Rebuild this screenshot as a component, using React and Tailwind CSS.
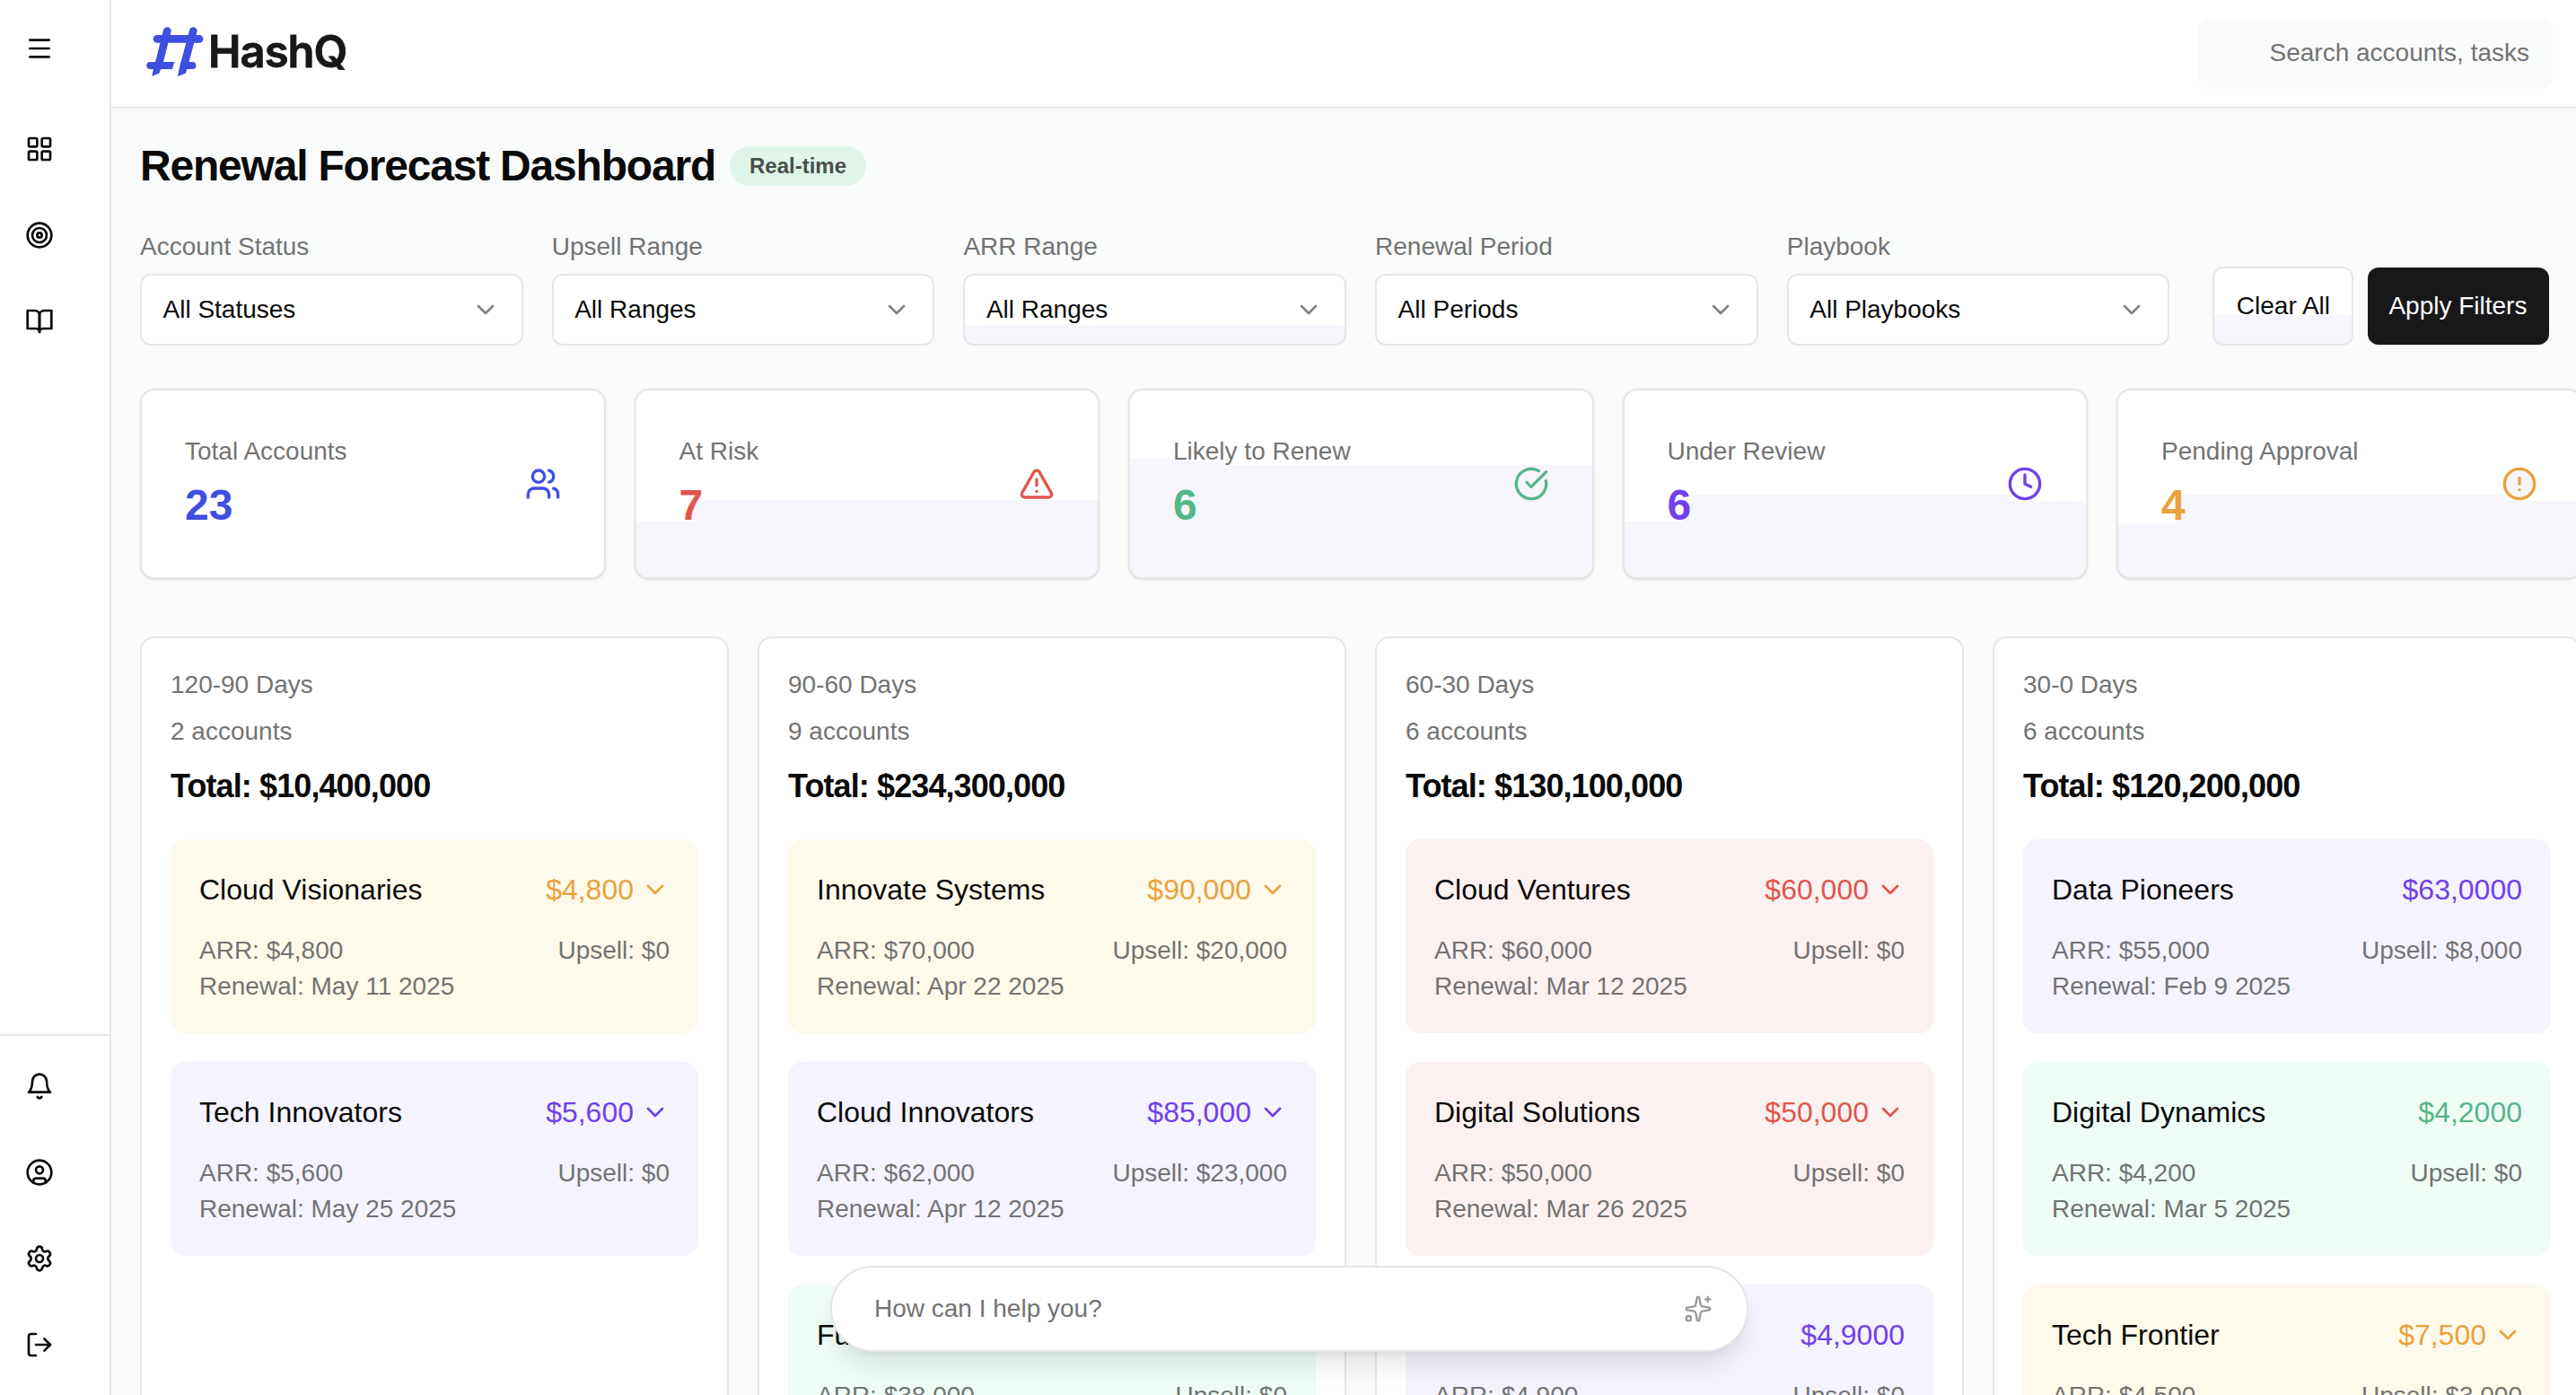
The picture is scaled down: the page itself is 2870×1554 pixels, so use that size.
import { Menu, LayoutGrid, Target, CircleUser, Settings, LogOut, ChevronDown, Users, TriangleAlert, CircleCheckBig, Clock, CircleAlert, Sparkles } from "lucide-react";

const C = { amber: "text-[#eba13c]", violet: "text-[#7140ea]", red: "text-[#e1554b]", green: "text-[#56b687]", blue: "text-[#3f4fe0]" };
const BG = { amber: "bg-[#fefaeb]", violet: "bg-[#f5f3fe]", red: "bg-[#fbf1f1]", green: "bg-[#effcf6]" };

const filters = [
  ["Account Status", "All Statuses"],
  ["Upsell Range", "All Ranges"],
  ["ARR Range", "All Ranges", true],
  ["Renewal Period", "All Periods"],
  ["Playbook", "All Playbooks"],
];

const stats = [
  { label: "Total Accounts", value: "23", color: "blue", Icon: Users, tint: [] },
  { label: "At Risk", value: "7", color: "red", Icon: TriangleAlert, tint: ["w-[64px] h-[62px]", "flex-1 h-[86px]"] },
  { label: "Likely to Renew", value: "6", color: "green", Icon: CircleCheckBig, tint: ["w-[60px] h-[132px]", "w-[44px] h-[129px]", "flex-1 h-[125px]"] },
  { label: "Under Review", value: "6", color: "violet", Icon: Clock, tint: ["w-[64px] h-[62px]", "flex-1 h-[92px]", "w-[84px] h-[85px]"] },
  { label: "Pending Approval", value: "4", color: "amber", Icon: CircleAlert, fill: "fill-[#f6f5fb]", tint: ["w-[64px] h-[60px]", "flex-1 h-[92px]", "w-[84px] h-[85px]"] },
];

const columns = [
  { title: "120-90 Days", count: 2, total: "$10,400,000", items: [
    ["Cloud Visionaries", "$4,800", "$4,800", "$0", "May 11 2025", "amber", true],
    ["Tech Innovators", "$5,600", "$5,600", "$0", "May 25 2025", "violet", true],
  ] },
  { title: "90-60 Days", count: 9, total: "$234,300,000", items: [
    ["Innovate Systems", "$90,000", "$70,000", "$20,000", "Apr 22 2025", "amber", true],
    ["Cloud Innovators", "$85,000", "$62,000", "$23,000", "Apr 12 2025", "violet", true],
    ["Future Systems", "$38,000", "$38,000", "$0", null, "green", false],
  ] },
  { title: "60-30 Days", count: 6, total: "$130,100,000", items: [
    ["Cloud Ventures", "$60,000", "$60,000", "$0", "Mar 12 2025", "red", true],
    ["Digital Solutions", "$50,000", "$50,000", "$0", "Mar 26 2025", "red", true],
    ["Smart Solutions", "$4,9000", "$4,900", "$0", null, "violet", false],
  ] },
  { title: "30-0 Days", count: 6, total: "$120,200,000", items: [
    ["Data Pioneers", "$63,0000", "$55,000", "$8,000", "Feb 9 2025", "violet", false],
    ["Digital Dynamics", "$4,2000", "$4,200", "$0", "Mar 5 2025", "green", false],
    ["Tech Frontier", "$7,500", "$4,500", "$3,000", null, "amber", true],
  ] },
];

function LineIcon({ paths }) {
  return (
    <svg className="size-8" viewBox="0 0 24 24" fill="none" stroke="currentColor" strokeWidth="2" strokeLinecap="round" strokeLinejoin="round">
      {paths.map((d) => <path key={d} d={d} />)}
    </svg>
  );
}

const bookPaths = ["M2 3h6a4 4 0 0 1 4 4v14a3 3 0 0 0-3-3H2z", "M22 3h-6a4 4 0 0 0-4 4v14a3 3 0 0 1 3-3h7z"];
const bellPaths = ["M6 8a6 6 0 0 1 12 0c0 7 3 9 3 9H3s3-2 3-9", "M10.3 21a1.94 1.94 0 0 0 3.4 0"];

function Logo() {
  return (
    <div className="flex items-center">
      <svg className="h-[58px] w-[66px]" viewBox="0 0 66 58" fill="none" stroke="#3f4fe0" strokeLinecap="round">
        <path d="M13 14.3H60" strokeWidth="8.7" />
        <path d="M5.3 44H20M46 44H52.4" strokeWidth="8" />
        <path d="M24.3 5.5L14.3 45M53.3 5.5L43.3 43" strokeWidth="8.7" />
        <path d="M14 40H32.3L30 48H14ZM10 42L7.3 56L15.5 52.5L18.7 42ZM39.3 40L36 56L45 52.5L47.8 42Z" fill="#3f4fe0" stroke="none" />
      </svg>
      <span className="ml-[4px] font-[Inter] text-[49px] leading-[56px] font-semibold tracking-[-1px] text-[#18181b] [-webkit-text-stroke:0.8px_#18181b]">HashQ</span>
    </div>
  );
}

function Sidebar() {
  return (
    <aside className="flex h-full w-[124px] shrink-0 flex-col border-r-2 border-[#e4e7e6] bg-white text-[#0a0a0a]">
      <nav className="flex flex-col pl-[28px] pt-[38px]">
        <Menu size={32} className="mb-[80px]" />
        <div className="flex flex-col gap-[64px]">
          <LayoutGrid size={32} />
          <Target size={32} />
          <LineIcon paths={bookPaths} />
        </div>
      </nav>
      <nav className="mt-auto flex flex-col gap-[64px] border-t-2 border-[#e4e7e6] pb-[40px] pl-[28px] pt-[40px]">
        <LineIcon paths={bellPaths} />
        <CircleUser size={32} />
        <Settings size={32} />
        <LogOut size={32} />
      </nav>
    </aside>
  );
}

function AccountCard({ item }) {
  const [name, amount, arr, upsell, date, color, expandable] = item;
  return (
    <article className={`h-[216px] shrink-0 rounded-[16px] px-[32px] pt-[32px] ${BG[color]}`}>
      <div className="flex h-[48px] items-center justify-between text-[32px]">
        <h4>{name}</h4>
        <div className={`flex items-center ${C[color]}`}>
          <span>{amount}</span>
          {expandable && <ChevronDown size={32} className="ml-[8px]" />}
        </div>
      </div>
      <div className="mt-[24px] text-[28px] leading-[40px] text-[#737373]">
        <div className="flex justify-between"><span>ARR: {arr}</span><span>Upsell: {upsell}</span></div>
        {date && <p>Renewal: {date}</p>}
      </div>
    </article>
  );
}

export default function App() {
  return (
    <div className="relative flex h-[1554px] w-[2870px] overflow-hidden bg-[#f9fbfa] font-['Liberation_Sans',sans-serif] text-[#0a0a0a]">
      <Sidebar />
      <div className="flex min-w-0 flex-1 flex-col">
        <header className="flex h-[121px] shrink-0 justify-between border-b-2 border-[#e4e7e6] bg-white pl-[38px] pr-[26px]">
          <div className="pt-[29px]"><Logo /></div>
          <div className="mt-[19px] flex h-[80px] w-[395px] items-center justify-end rounded-[12px] bg-[#f9fbfa] pr-[26px] text-[28px] text-[#737373]">Search accounts, tasks</div>
        </header>
        <main className="flex min-h-0 flex-1 flex-col pl-[32px] pt-[32px]">
          <div className="flex h-[64px] items-center">
            <h1 className="text-[48px] font-bold tracking-[-1.2px]">Renewal Forecast Dashboard</h1>
            <span className="ml-[16px] flex h-[44px] items-center rounded-full bg-[#e0f5e9] px-[22px] text-[24px] font-bold text-[#4a4f4c]">Real-time</span>
          </div>
          <div className="mt-[38px] flex items-end">
            <div className="flex gap-[32px]">
              {filters.map(([label, value, tint]) => (
                <div key={label} className="w-[426.7px]">
                  <div className="text-[28px] leading-[40px] text-[#737373]">{label}</div>
                  <div className={`mt-[10px] flex h-[80px] items-center justify-between rounded-[12px] border-2 border-[#e4e7e6] pl-[23.5px] pr-[24px] text-[28px] ${tint ? "bg-linear-to-b from-white from-72% to-[#f6f5fb] to-72%" : "bg-white"}`}>
                    {value}<ChevronDown size={32} className="opacity-50" />
                  </div>
                </div>
              ))}
            </div>
            <button className="ml-[48px] h-[88px] w-[157px] rounded-[12px] border-2 border-[#e4e7e6] bg-linear-to-b from-white from-62% to-[#f6f5fb] to-62% text-[28px]">Clear All</button>
            <button className="mb-px ml-[16px] h-[86px] w-[202px] rounded-[12px] bg-[#18181b] pr-[2px] text-[28px] text-white">Apply Filters</button>
          </div>
          <div className="mt-[48px] flex gap-[32px]">
            {stats.map(({ label, value, color, Icon, fill, tint }) => (
              <section key={label} className="relative h-[212px] w-[518.5px] shrink-0 overflow-hidden rounded-[16px] border-2 border-[#e4e7e6] bg-white shadow-sm">
                <div className="absolute inset-0 flex items-end">
                  {tint.map((t, i) => <div key={i} className={`bg-[#f6f5fb] ${t}`} />)}
                </div>
                <div className="relative flex h-[208px] items-center justify-between px-[48px]">
                  <div>
                    <p className="text-[28px] leading-[40px] text-[#737373]">{label}</p>
                    <p className={`mt-[8px] text-[48px] leading-[64px] font-bold ${C[color]}`}>{value}</p>
                  </div>
                  <Icon size={40} className={`${C[color]} ${fill || ""}`} />
                </div>
              </section>
            ))}
          </div>
          <div className="mt-[64px] flex flex-1 gap-[32px]">
            {columns.map((col) => (
              <section key={col.title} className="h-[900px] w-[656px] shrink-0 rounded-[16px] border-2 border-[#e4e7e6] bg-white px-[32px] pt-[32px]">
                <p className="text-[28px] leading-[40px] text-[#737373]">{col.title}</p>
                <p className="mt-[12px] text-[28px] leading-[40px] text-[#737373]">{col.count} accounts</p>
                <p className="mt-[13px] text-[36px] leading-[56px] font-bold tracking-[-0.9px]">Total: {col.total}</p>
                <div className="mt-[31px] flex flex-col gap-[32px]">
                  {col.items.map((item) => <AccountCard key={item[0]} item={item} />)}
                </div>
              </section>
            ))}
          </div>
        </main>
      </div>
      <div className="absolute left-[925px] top-[1410px] flex h-[96px] w-[1023px] items-center justify-between rounded-full border-2 border-[#e4e7e6] bg-white pl-[47px] pr-[38px] text-[28px] text-[#737373] shadow-[0_20px_30px_-6px_rgba(0,0,0,0.1),0_8px_12px_-8px_rgba(0,0,0,0.1)]">
        How can I help you?
        <Sparkles size={32} strokeWidth={1.75} className="text-[#9a9a9a]" />
      </div>
    </div>
  );
}
